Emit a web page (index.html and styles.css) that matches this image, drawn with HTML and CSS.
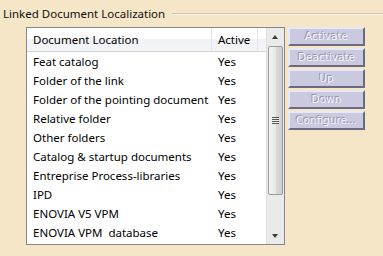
FILE: index.html
```html
<!DOCTYPE html>
<html>
<head>
<meta charset="utf-8">
<link rel="stylesheet" href="styles.css">
</head>
<body>
<div class="group">
  <div class="group-title">
    <span class="title-text">Linked Document Localization</span>
    <span class="title-line"></span>
  </div>
  <div class="group-body">
    <div class="listbox">
      <div class="list">
        <div class="list-header">
          <div class="col-loc">Document Location</div>
          <div class="col-act">Active</div>
          <div class="col-rest"></div>
        </div>
        <div class="row"><div class="col-loc">Feat catalog</div><div class="col-act">Yes</div></div>
        <div class="row"><div class="col-loc">Folder of the link</div><div class="col-act">Yes</div></div>
        <div class="row"><div class="col-loc">Folder of the pointing document</div><div class="col-act">Yes</div></div>
        <div class="row"><div class="col-loc">Relative folder</div><div class="col-act">Yes</div></div>
        <div class="row"><div class="col-loc">Other folders</div><div class="col-act">Yes</div></div>
        <div class="row"><div class="col-loc">Catalog &amp; startup documents</div><div class="col-act">Yes</div></div>
        <div class="row"><div class="col-loc">Entreprise Process-libraries</div><div class="col-act">Yes</div></div>
        <div class="row"><div class="col-loc">IPD</div><div class="col-act">Yes</div></div>
        <div class="row"><div class="col-loc">ENOVIA V5 VPM</div><div class="col-act">Yes</div></div>
        <div class="row"><div class="col-loc">ENOVIA VPM&nbsp; database</div><div class="col-act">Yes</div></div>
      </div>
      <div class="scrollbar">
        <div class="arrow arrow-up"></div>
        <div class="track">
          <div class="thumb"><span class="grip"></span></div>
        </div>
        <div class="arrow arrow-down"></div>
      </div>
    </div>
    <div class="buttons">
      <div class="btn">Activate</div>
      <div class="btn">Deactivate</div>
      <div class="btn">Up</div>
      <div class="btn">Down</div>
      <div class="btn">Configure...</div>
    </div>
  </div>
</div>
</body>
</html>
```
FILE: styles.css
```css
html, body {
  margin: 0;
  padding: 0;
}
body {
  width: 383px;
  height: 256px;
  overflow: hidden;
  background: #f6e6c8;
  font-family: "Noto Sans", "Open Sans", sans-serif;
  font-size: 11.5px;
  color: #000;
}
.group {
  padding: 6px 0 0 3px;
}
.group-title {
  display: flex;
  align-items: center;
  height: 16px;
}
.title-text {
  line-height: 16px;
  color: #111;
}
.title-line {
  flex: 1;
  margin-left: 7px;
  border-top: 1px solid #c9c3b9;
  border-bottom: 1px solid #fbf4e8;
}
.group-body {
  display: flex;
  align-items: flex-start;
  padding: 5px 0 0 23px;
  gap: 2px;
}
.listbox {
  display: flex;
  width: 257px;
  height: 216px;
  border: 1px solid #828790;
  background: #fff;
  overflow: hidden;
}
.list {
  width: 240px;
  overflow: hidden;
}
.list-header {
  display: flex;
  height: 23px;
  border-bottom: 1px solid #d5d5d5;
  background: linear-gradient(#ffffff 0%, #ffffff 45%, #f1f2f5 50%, #f3f4f7 100%);
  line-height: 23px;
}
.list-header .col-loc {
  border-right: 1px solid #e3e4e7;
}
.list-header .col-act {
  border-right: 1px solid #e3e4e7;
}
.col-loc {
  width: 178px;
  padding-left: 6px;
  white-space: nowrap;
}
.col-act {
  width: 39px;
  padding-left: 6px;
}
.col-rest {
  flex: 1;
}
.row {
  display: flex;
  height: 19px;
  line-height: 19px;
}
.row .col-loc {
  width: 179px;
}
.scrollbar {
  width: 17px;
  display: flex;
  flex-direction: column;
  background: #eaeaea;
  border-left: 1px solid #e0e0e0;
}
.arrow {
  height: 17px;
  position: relative;
}
.arrow-up::after, .arrow-down::after {
  content: "";
  position: absolute;
  left: 5px;
  width: 0;
  height: 0;
  border-left: 3.5px solid transparent;
  border-right: 3.5px solid transparent;
}
.arrow-up::after {
  top: 7px;
  border-bottom: 4px solid #3c3c3c;
}
.arrow-down::after {
  top: 7px;
  border-top: 4px solid #3c3c3c;
}
.track {
  flex: 1;
  padding: 1px 1px 0 1px;
}
.thumb {
  height: 147px;
  width: 13px;
  border: 1px solid #9b9b9b;
  border-radius: 2px;
  background: linear-gradient(to right, #f4f4f4 0%, #e8e8e8 50%, #d9d9d9 55%, #cfcfcf 100%);
  display: flex;
  align-items: center;
  justify-content: center;
}
.grip {
  width: 7px;
  height: 7px;
  background: repeating-linear-gradient(#555 0, #555 1px, #eee 1px, #eee 2px);
}
.buttons {
  display: flex;
  flex-direction: column;
  gap: 2px;
  margin-left: 1px;
}
.btn {
  width: 73px;
  height: 15px;
  background: #c9c9e0;
  border: 2px solid;
  border-color: #e8e8f4 #6a6a80 #6a6a80 #e8e8f4;
  font-family: "DejaVu Sans", sans-serif;
  font-size: 10.5px;
  line-height: 15px;
  text-align: center;
  color: #f4f4fa;
  text-shadow: -1px -1px 0 #8e8ea6;
}
```
